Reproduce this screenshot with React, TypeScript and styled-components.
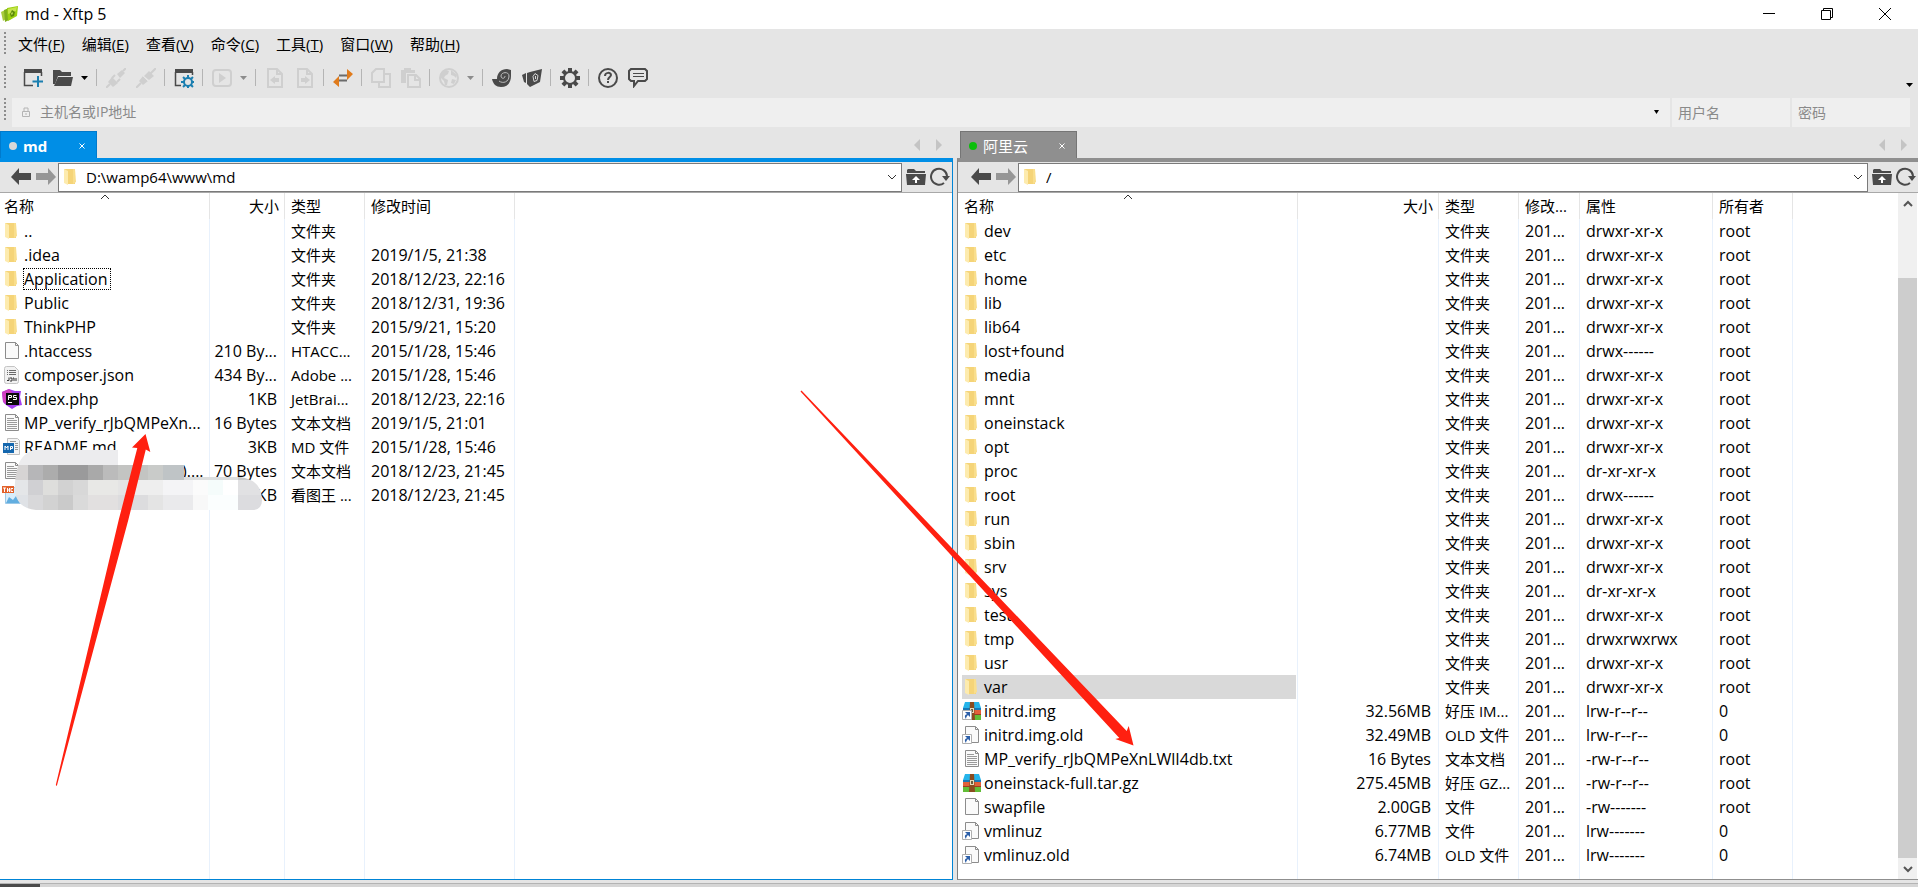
import React from "react";
import styled, { createGlobalStyle, css } from "styled-components";

const FONT = `"Open Sans", "Noto Sans CJK SC", sans-serif`;

const GlobalStyle = createGlobalStyle`
  *, *::before, *::after { box-sizing: border-box; }
  body { margin: 0; background: #e5e5e5; color: #000; font-family: ${FONT}; font-size: 15px; }
  button, input { font: inherit; color: inherit; margin: 0; padding: 0; border: 0; background: none; outline: 0; }
  svg { display: block; flex: none; }
`;

/* ---------- window frame ---------- */

const Window = styled.div`
  position: relative;
  display: flex;
  flex-direction: column;
  height: 100vh;
  overflow: hidden;
  background: #e5e5e5;
`;

const TitleBar = styled.header`
  display: flex;
  align-items: center;
  height: 29px;
  flex: none;
  padding: 0 4px 1px 0;
  background: #fff;
`;

const Title = styled.h1`
  flex: 1;
  margin: 0 0 0 5px;
  font-size: 16px;
  font-weight: 400;
  line-height: 26px;
`;

const WindowButton = styled.button`
  display: grid;
  place-items: center;
  width: 58px;
  height: 27px;
`;

const Grip = styled.span`
  width: 2px;
  height: 24px;
  margin-left: 4px;
  flex: none;
  background: repeating-linear-gradient(#8c8c8c 0 2px, transparent 2px 4px);
`;

const MenuBar = styled.nav`
  display: flex;
  align-items: center;
  height: 32px;
  flex: none;
  padding-bottom: 3px;
`;

const Menus = styled.div`
  display: flex;
  gap: 17px;
  margin-left: 12px;
`;

const MenuButton = styled.button`
  line-height: 24px;
  white-space: nowrap;
`;

const ToolBar = styled.div`
  display: flex;
  align-items: center;
  height: 35px;
  flex: none;
  padding-bottom: 2px;
`;

const Tools = styled.div`
  display: flex;
  align-items: center;
  flex: 1;
  margin-left: 12px;
`;

const ToolButton = styled.button`
  display: grid;
  place-items: center;
  width: 30px;
  height: 30px;
`;

const DropButton = styled.button`
  display: grid;
  place-items: center;
  width: 15px;
  height: 30px;
  padding-right: 3px;
`;

const Separator = styled.span`
  width: 1px;
  height: 17px;
  margin: 0 4px 0 3px;
  background: #b4b4b4;
`;

const OverflowButton = styled.button`
  align-self: flex-end;
  padding: 0 5px 7px;
`;

const AddressBar = styled.form`
  display: flex;
  gap: 2px;
  height: 35px;
  flex: none;
  padding: 2px 8px 4px 0;
`;

const Field = styled.label<{ $grow?: boolean }>`
  display: flex;
  align-items: center;
  width: 118px;
  padding: 0 6px;
  background: #efefef;
  font-size: 14px;
  ${(p) =>
    p.$grow &&
    css`
      flex: 1;
      margin-left: 4px;
      padding: 0 5px 1px 9px;
    `}
`;

const FieldInput = styled.input<{ $gap?: number }>`
  flex: 1;
  min-width: 0;
  margin-left: ${(p) => p.$gap ?? 0}px;
  line-height: 28px;
  &::placeholder {
    color: #8a8a8a;
    opacity: 1;
  }
`;

/* ---------- panels ---------- */

const Panels = styled.main`
  display: grid;
  grid-template-columns: minmax(0, 953fr) minmax(0, 961fr);
  gap: 4px;
  flex: 1;
  min-height: 0;
`;

const Panel = styled.section`
  display: flex;
  flex-direction: column;
  min-height: 0;
`;

const TabRow = styled.div<{ $indent: number }>`
  display: flex;
  justify-content: space-between;
  height: 27px;
  flex: none;
  padding: 0 3px 0 ${(p) => p.$indent}px;
`;

const Tab = styled.div<{ $active: boolean; $width: number }>`
  display: flex;
  align-items: center;
  width: ${(p) => p.$width}px;
  padding: 2px 3px 0 8px;
  color: #fff;
  background: ${(p) => (p.$active ? "#008ee6" : "#8f8f8f")};
  border: 1px solid ${(p) => (p.$active ? "#007acc" : "#757575")};
  border-bottom: 0;
  font-weight: ${(p) => (p.$active ? 700 : 400)};
`;

const Dot = styled.span<{ $color: string }>`
  width: 8px;
  height: 8px;
  border-radius: 50%;
  background: ${(p) => p.$color};
`;

const TabLabel = styled.span`
  flex: 1;
  margin-left: 6px;
  line-height: 22px;
`;

const CloseButton = styled.button`
  display: grid;
  place-items: center;
  width: 22px;
  height: 22px;
`;

const TabArrows = styled.div`
  display: flex;
  align-items: center;
`;

const TabArrow = styled.button`
  display: grid;
  place-items: center;
  width: 22px;
  height: 20px;
`;

const Body = styled.div<{ $active: boolean }>`
  display: flex;
  flex-direction: column;
  flex: 1;
  min-height: 0;
  border-top: 4px solid ${(p) => (p.$active ? "#008ee6" : "#8f8f8f")};
  border-bottom: 1px solid ${(p) => (p.$active ? "#0084d6" : "#8f8f8f")};
  ${(p) =>
    p.$active
      ? css`
          border-right: 1px solid #0084d6;
        `
      : css`
          border-left: 1px solid #808080;
        `}
`;

const NavRow = styled.div<{ $indent: number }>`
  display: flex;
  align-items: center;
  height: 31px;
  flex: none;
  padding: 0 0 0 ${(p) => p.$indent}px;
  border-bottom: 1px solid #a8a8a8;
`;

const NavButton = styled.button<{ $width: number }>`
  display: grid;
  place-items: center;
  width: ${(p) => p.$width}px;
  height: 28px;
`;

const PathBox = styled.label`
  display: flex;
  align-items: center;
  flex: 1;
  height: 29px;
  margin-right: 2px;
  padding: 0 3px 0 2px;
  background: #fff;
  border: 1px solid #7a7a7a;
`;

const PathInput = styled.input`
  flex: 1;
  min-width: 0;
  margin-left: 5px;
  font-size: 15px;
`;

const ListArea = styled.div`
  display: flex;
  flex: 1;
  min-height: 0;
  background: #fff;
`;

const FileTable = styled.table`
  flex: 1;
  width: 100%;
  height: 100%;
  table-layout: fixed;
  border-collapse: separate;
  border-spacing: 0;
`;

const HeadCell = styled.th<{ $right?: boolean; $indent?: number }>`
  position: relative;
  height: 26px;
  padding: 0 5px 0 ${(p) => p.$indent ?? 6}px;
  text-align: ${(p) => (p.$right ? "right" : "left")};
  font-weight: 400;
  line-height: 22px;
  white-space: nowrap;
  border-right: 1px solid #e5e5e5;
  &:last-child {
    border-right: 0;
  }
`;

const SortMark = styled.span`
  position: absolute;
  top: 0;
  left: 50%;
  transform: translateX(-50%);
`;

const Cell = styled.td<{ $right?: boolean; $large?: boolean }>`
  height: 24px;
  padding: ${(p) => (p.$right ? "0 7px 0 0" : "0 0 0 6px")};
  text-align: ${(p) => (p.$right ? "right" : "left")};
  font-size: ${(p) => (p.$large ? 16 : 15)}px;
  line-height: 22px;
  white-space: nowrap;
  overflow: hidden;
  border-right: 1px solid #e8f1fc;
  &:last-child {
    border-right: 0;
  }
`;

const NameCell = styled(Cell)<{ $indent: number }>`
  padding: 0 1px 0 ${(p) => p.$indent}px;
`;

const FillCell = styled(Cell)`
  height: auto;
`;

const NameLine = styled.div<{ $selected?: boolean }>`
  display: flex;
  align-items: center;
  gap: 2px;
  height: 24px;
  background: ${(p) => (p.$selected ? "#d9d9d9" : "transparent")};
`;

const FileName = styled.span<{ $focused?: boolean; $covered?: number }>`
  line-height: 20px;
  padding-left: ${(p) => p.$covered ?? 0}px;
  ${(p) =>
    p.$focused &&
    css`
      padding-right: 2px;
      outline: 1px dotted #000;
    `}
`;

const ScrollBar = styled.div`
  display: flex;
  flex-direction: column;
  width: 19px;
  flex: none;
  margin-right: 1px;
  background: #f0f0f0;
`;

const ScrollButton = styled.button`
  display: grid;
  place-items: center;
  height: 21px;
  flex: none;
`;

const ScrollSpace = styled.div`
  flex: 64;
`;

const ScrollThumb = styled.div`
  flex: 580;
  background: #cdcdcd;
`;

const StatusStrip = styled.footer`
  height: 4px;
  flex: none;
  margin-top: 3px;
  border-top: 1px solid #b4b4b4;
  background: #d6d6d6;
`;

const StatusMark = styled.div`
  width: 40px;
  height: 3px;
  background: #4a4a4a;
`;

const Overlay = styled.svg`
  position: absolute;
  top: 0;
  left: 0;
  pointer-events: none;
`;

/* ---------- icons ---------- */

const DARK = "#4a4a4a";
const FAINT = "#cfcfcf";

const Svg = ({ children, w = 20, h = 20 }: { children: React.ReactNode; w?: number; h?: number }) => (
  <svg width={w} height={h} viewBox={`0 0 ${w} ${h}`} aria-hidden="true" fill="none">
    {children}
  </svg>
);

const Caret = ({ color = "#000", w = 7 }: { color?: string; w?: number }) => (
  <Svg w={w} h={4}>
    <path d={`M0 0h${w}L${w / 2} 4z`} fill={color} />
  </Svg>
);

const AppLogo = () => (
  <Svg w={20} h={18}>
    <path d="M1 7l4-2 1 9-3 2z" fill="#a8cc3c" />
    <path d="M4 5l5-2 2 11-6 3z" fill="#7fae1c" />
    <path d="M7 3l11-2-1 10-9 5z" fill="#9bd010" />
    <path d="M8 4l9-2-1 4-8 3z" fill="#c5e44a" />
    <path d="M12 5l3 2-1 4-3 1-1-3z" fill="#5c8a08" />
    <path d="M12 7l1 1-1 2-1-1z" fill="#c8e65a" />
  </Svg>
);

const FolderIcon = () => (
  <Svg>
    <path d="M3 2h11v15H7z" fill="#f5d478" />
    <path d="M12 2h2l1 13-3 2z" fill="#f9de8c" />
    <path d="M3 2l4 2v14l-4-2z" fill="#fdebae" />
  </Svg>
);

const Page = () => (
  <>
    <path d="M3.5 1.5h10l3 3v13h-13z" fill="#fafafa" stroke="#8c8c8c" />
    <path d="M13.5 1.5v3h3" stroke="#8c8c8c" />
  </>
);

const ShortcutMark = () => (
  <>
    <path d="M.5 9.5h9v9h-9z" fill="#fff" stroke="#b0b0b0" />
    <path d="M3 11h5v5l-2-2c-1 1-2 2-2 4-2-3-1-4 1-5z" fill="#2c5fa8" />
  </>
);

const Archive = () => (
  <>
    <path d="M3 1h14l2 6H1z" fill="#25b4ea" />
    <path d="M1 7h18v2H1z" fill="#1779b8" />
    <path d="M1 9h18v4H1z" fill="#e2603a" />
    <path d="M1 13h18v1H1z" fill="#9b3d22" />
    <path d="M1 14h18v5H1z" fill="#62bd37" />
    <path d="M8 1h4l1 18H7z" fill="#8a4b1f" />
    <path d="M8 7h4v5H8z" fill="#e6d9b8" />
    <path d="M9 8h2v3H9z" fill="#6b5a3c" />
  </>
);

type IconKind = "folder" | "page" | "text" | "json" | "php" | "md" | "image" | "zip" | "zipLink" | "pageLink";

const FileIcon = ({ kind }: { kind: IconKind }) => {
  switch (kind) {
    case "folder":
      return <FolderIcon />;
    case "page":
      return (
        <Svg>
          <Page />
        </Svg>
      );
    case "pageLink":
      return (
        <Svg>
          <Page />
          <ShortcutMark />
        </Svg>
      );
    case "text":
      return (
        <Svg>
          <Page />
          <path d="M5 5.5h7M5 7.5h10M5 9.5h10M5 11.5h10M5 13.5h10M5 15.5h10" stroke="#9a9a9a" />
        </Svg>
      );
    case "json":
      return (
        <Svg>
          <path d="M2.5 3.5q0-2 2-2h8l4 4v11q0 2-2 2h-10q-2 0-2-2z" fill="#f2f2f2" stroke="#c4c4c4" />
          <path d="M5 5.5h1M7 5.5h7M5 7.5h1M7 7.5h7M5 9.5h1M7 9.5h7" stroke="#6a6a6a" />
          <path d="M5 15.5h2v-3M8 13h2v3H8M11 13h1v3M14 16v-3" stroke="#333" />
        </Svg>
      );
    case "php":
      return (
        <Svg>
          <path d="M0 3l7-3 6 2h6l-1 6 2 8-5 1-5 3-6-4-3-3z" fill="#a33ff0" />
          <path d="M0 3l7-3 3 3-7 12-2-3z" fill="#d03fc0" />
          <path d="M4 4h13v12H4z" fill="#0a0a0a" />
          <path d="M6.5 11V6.5h3v2h-3M14.5 6.5h-3v2h3v2H11M6 13.5h4" stroke="#fff" />
        </Svg>
      );
    case "md":
      return (
        <Svg>
          <path d="M5.5 1.5h10l2 2v14h-12z" fill="#f4f4f4" stroke="#c0c0c0" />
          <path d="M13 6.5h3M13 8.5h3M13 10.5h3M13 12.5h3M8 4.5h6" stroke="#999" />
          <path d="M1 6h11v10H1z" fill="#1467ae" />
          <path d="M3 13V9l1.5 2L6 9v4M8.5 13V9.5h2v2h-2" stroke="#fff" />
        </Svg>
      );
    case "image":
      return (
        <Svg>
          <path d="M3.5 2.5h15v16h-15z" fill="#d8edfb" stroke="#9cc9e8" />
          <path d="M4 18l3-6 4 3 3-4 4 7z" fill="#62aee0" />
          <path d="M0 1h12v7H0z" fill="#e2622c" />
          <path d="M1 3h3M2.5 3v4M5.5 3v4M7.5 3v4M5 5h2M11 3.5H9v3h2" stroke="#fff" />
        </Svg>
      );
    case "zip":
      return (
        <Svg>
          <Archive />
        </Svg>
      );
    case "zipLink":
      return (
        <Svg>
          <Archive />
          <ShortcutMark />
        </Svg>
      );
  }
};

const NewSession = () => (
  <Svg>
    <path d="M1 1h18v4H1z" fill={DARK} />
    <path d="M1.5 4v13.5H10M18.5 4v4" stroke={DARK} strokeWidth="1.5" />
    <path d="M15 8v11M9.5 13.5h11" stroke="#1b7fb0" strokeWidth="2" />
  </Svg>
);

const OpenFolder = () => (
  <Svg>
    <path d="M0 2h7l2 2h9v4H5L2 16H0z" fill={DARK} />
    <path d="M5 9h15l-2 9H1z" fill={DARK} />
  </Svg>
);

const Unplug = () => (
  <Svg>
    <path d="M11 6l5-4 3 3-5 5zM2 14l4-5 6 6-5 4z" fill={FAINT} />
    <path d="M17 3l3-3M0 20l4-4M6 10l3-3M11 14l3-3" stroke={FAINT} strokeWidth="2" />
  </Svg>
);

const Plug = () => (
  <Svg>
    <path d="M0 20l5-5M14 6l6-6" stroke={FAINT} strokeWidth="2" />
    <path d="M3 13l4-5 5 5-5 4zM8 8l5-5 5 5-5 4z" fill={FAINT} />
    <path d="M6 7l7 7" stroke="#e5e5e5" />
  </Svg>
);

const gearPath = (cx: number, cy: number, r: number, ro: number) =>
  Array.from({ length: 8 }, (_, i) => {
    const a = (i * Math.PI) / 4;
    return `M${cx + r * Math.cos(a)} ${cy + r * Math.sin(a)}L${cx + ro * Math.cos(a)} ${cy + ro * Math.sin(a)}`;
  }).join("");

const SessionProps = () => (
  <Svg>
    <path d="M1 1h18v4H1z" fill={DARK} />
    <path d="M1.5 4v13.5H7M18.5 4v3" stroke={DARK} strokeWidth="1.5" />
    <circle cx="14" cy="14" r="4" stroke="#1b7fb0" strokeWidth="2" />
    <path d={gearPath(14, 14, 4, 7)} stroke="#1b7fb0" strokeWidth="2" />
  </Svg>
);

const Play = () => (
  <Svg>
    <rect x="1" y="2" width="18" height="16" rx="3" stroke={FAINT} strokeWidth="2" />
    <path d="M7 5l7 5-7 5z" fill={FAINT} />
  </Svg>
);

const Transfer = ({ flip }: { flip?: boolean }) => (
  <Svg>
    <path d="M3 1h9l5 5v13H3z" stroke={FAINT} strokeWidth="2" />
    <path d="M12 1v5h5" stroke={FAINT} strokeWidth="2" />
    <path d={flip ? "M15 12l-5-4v2H6v4h4v2z" : "M5 12l5-4v2h4v4h-4v2z"} fill={FAINT} />
  </Svg>
);

const Sync = () => (
  <Svg>
    <path d="M6 7.5h9M5 12.5h9" stroke="#6b6b6b" strokeWidth="2" />
    <path d="M14 1l6 5-6 6zM6 8l-6 6 6 5z" fill="#e07b1c" />
  </Svg>
);

const Copy = () => (
  <Svg>
    <path d="M5 1h8v13H1V5z" stroke={FAINT} strokeWidth="2" />
    <path d="M14 6h5v13H8v-4" stroke={FAINT} strokeWidth="2" />
  </Svg>
);

const Paste = () => (
  <Svg>
    <path d="M0 2h14v3H5v10H0zM3 0h7v2H3z" fill={FAINT} />
    <path d="M7 7h8l4 4v8H7z" stroke={FAINT} strokeWidth="2" />
    <path d="M14 7v5h5" stroke={FAINT} strokeWidth="2" />
  </Svg>
);

const Globe = () => (
  <Svg>
    <circle cx="10" cy="10" r="9" stroke={FAINT} strokeWidth="2" />
    <path d="M2 5l5-3 3 1-1 3-3 2-1 2 4 2-1 5-2 0-1-4-3-3zM12 2l6 5-1 3-2-2-3-1zM13 11l4 1-2 4-3-1z" fill={FAINT} />
  </Svg>
);

const Shell = () => (
  <Svg>
    <path d="M0 11h5c0-6 4-10 10-10l4 1v6c0 7-4 11-10 11-5 0-8-3-9-8z" fill={DARK} />
    <path d="M7 13c4 3 10 1 10-5 0-5-8-4-8 0 0 3 4 3 4 0" stroke="#bdbdbd" />
  </Svg>
);

const FtpBook = () => (
  <Svg>
    <path d="M0 7l4-2v10l-2-1zM5 5l3-1v15l-3-3z" fill={DARK} />
    <path d="M8 4l12-3-2 13-10 5z" fill={DARK} />
    <path d="M13 5.5l3 2-1 5-3 1-1-5z" stroke="#d8d8d8" />
    <path d="M13.5 8v3" stroke="#d8d8d8" />
  </Svg>
);

const Gear = () => (
  <Svg>
    <circle cx="10" cy="10" r="6" stroke={DARK} strokeWidth="2" />
    <path d={gearPath(10, 10, 6, 10)} stroke={DARK} strokeWidth="4" />
  </Svg>
);

const Help = () => (
  <Svg>
    <circle cx="10" cy="10" r="9" stroke={DARK} strokeWidth="2" />
    <path d="M7 8c0-4 6-4 6-1 0 2-3 2-3 5M10 13v2" stroke={DARK} strokeWidth="2" />
  </Svg>
);

const Chat = () => (
  <Svg>
    <path d="M3 1h14l2 2v8l-2 2H10l-4 5v-5H3l-2-2V3z" stroke={DARK} strokeWidth="2" />
    <path d="M5 5.5h11M5 8.5h11" stroke={DARK} />
  </Svg>
);

const ArrowIcon = ({ right }: { right?: boolean }) => (
  <Svg>
    <path d={right ? "M20 10L12 1v5H0v7h12v5z" : "M0 10l8-9v5h12v7H8v5z"} fill={right ? "#969696" : DARK} />
  </Svg>
);

const FolderUp = () => (
  <Svg>
    <path d="M1 3l1-1h6l2 2h9v2H1z" fill={DARK} />
    <path d="M0 7h20l-1 11H1z" fill={DARK} />
    <path d="M10 9l4 4h-3v3H9v-3H6z" fill="#fff" />
  </Svg>
);

const Refresh = () => (
  <Svg>
    <path d="M14 16a8 8 0 1 1 3-7" stroke={DARK} strokeWidth="2" />
    <path d="M12 9h8l-4 5z" fill={DARK} />
  </Svg>
);

const Lock = () => (
  <Svg w={10} h={12}>
    <path d="M1.5 5.5h7v5h-7zM3 5V2h4v3M5 7v2" stroke="#b4b4b4" />
  </Svg>
);

const Chevron = ({ up, bold }: { up?: boolean; bold?: boolean }) => (
  <Svg w={12} h={8}>
    <path d={up ? "M2 6l4-4 4 4" : "M2 2l4 4 4-4"} stroke={bold ? "#555" : "#333"} strokeWidth={bold ? 2 : 1} />
  </Svg>
);

const SmallCross = () => (
  <Svg w={6} h={6}>
    <path d="M.5.5l5 5M5.5.5l-5 5" stroke="#fff" />
  </Svg>
);

/* ---------- data ---------- */

type Row = {
  icon: IconKind;
  name: string;
  cells: string[];
  focused?: boolean;
  selected?: boolean;
  covered?: number;
};

const localRows: Row[] = [
  { icon: "folder", name: "..", cells: ["", "文件夹", ""] },
  { icon: "folder", name: ".idea", cells: ["", "文件夹", "2019/1/5, 21:38"] },
  { icon: "folder", name: "Application", cells: ["", "文件夹", "2018/12/23, 22:16"], focused: true },
  { icon: "folder", name: "Public", cells: ["", "文件夹", "2018/12/31, 19:36"] },
  { icon: "folder", name: "ThinkPHP", cells: ["", "文件夹", "2015/9/21, 15:20"] },
  { icon: "page", name: ".htaccess", cells: ["210 By...", "HTACC...", "2015/1/28, 15:46"] },
  { icon: "json", name: "composer.json", cells: ["434 By...", "Adobe ...", "2015/1/28, 15:46"] },
  { icon: "php", name: "index.php", cells: ["1KB", "JetBrai...", "2018/12/23, 22:16"] },
  { icon: "text", name: "MP_verify_rJbQMPeXn...", cells: ["16 Bytes", "文本文档", "2019/1/5, 21:01"] },
  { icon: "md", name: "README.md", cells: ["3KB", "MD 文件", "2015/1/28, 15:46"] },
  { icon: "text", name: ")....", cells: ["70 Bytes", "文本文档", "2018/12/23, 21:45"], covered: 158 },
  { icon: "image", name: "", cells: ["KB", "看图王 ...", "2018/12/23, 21:45"] },
];

const folder = (name: string, mode = "drwxr-xr-x"): Row => ({
  icon: "folder",
  name,
  cells: ["", "文件夹", "201...", mode, "root"],
});

const remoteRows: Row[] = [
  folder("dev"),
  folder("etc"),
  folder("home"),
  folder("lib"),
  folder("lib64"),
  folder("lost+found", "drwx------"),
  folder("media"),
  folder("mnt"),
  folder("oneinstack"),
  folder("opt"),
  folder("proc", "dr-xr-xr-x"),
  folder("root", "drwx------"),
  folder("run"),
  folder("sbin"),
  folder("srv"),
  folder("sys", "dr-xr-xr-x"),
  folder("test"),
  folder("tmp", "drwxrwxrwx"),
  folder("usr"),
  { ...folder("var"), selected: true },
  { icon: "zipLink", name: "initrd.img", cells: ["32.56MB", "好压 IM...", "201...", "lrw-r--r--", "0"] },
  { icon: "pageLink", name: "initrd.img.old", cells: ["32.49MB", "OLD 文件", "201...", "lrw-r--r--", "0"] },
  { icon: "text", name: "MP_verify_rJbQMPeXnLWlI4db.txt", cells: ["16 Bytes", "文本文档", "201...", "-rw-r--r--", "root"] },
  { icon: "zip", name: "oneinstack-full.tar.gz", cells: ["275.45MB", "好压 GZ...", "201...", "-rw-r--r--", "root"] },
  { icon: "page", name: "swapfile", cells: ["2.00GB", "文件", "201...", "-rw-------", "root"] },
  { icon: "pageLink", name: "vmlinuz", cells: ["6.77MB", "文件", "201...", "lrw-------", "0"] },
  { icon: "pageLink", name: "vmlinuz.old", cells: ["6.74MB", "OLD 文件", "201...", "lrw-------", "0"] },
];

const menus = [
  ["文件", "F"],
  ["编辑", "E"],
  ["查看", "V"],
  ["命令", "C"],
  ["工具", "T"],
  ["窗口", "W"],
  ["帮助", "H"],
];

/* ---------- file list ---------- */

/* The type column, mostly Chinese text, keeps the base text size. */
const TYPE_COLUMN = 1;

type ListProps = { heads: string[]; widths: number[]; rows: Row[]; indent: number };

const FileList = ({ heads, widths, rows, indent }: ListProps) => (
  <FileTable>
    <colgroup>
      {widths.map((w, i) => (
        <col key={i} width={w} />
      ))}
      <col />
    </colgroup>
    <thead>
      <tr>
        {heads.map((h, i) => (
          <HeadCell key={h} $right={i === 1} $indent={i === 0 ? indent + 2 : undefined}>
            {h}
            {i === 0 && (
              <SortMark>
                <Chevron up />
              </SortMark>
            )}
          </HeadCell>
        ))}
        <HeadCell as="td" />
      </tr>
    </thead>
    <tbody>
      {rows.map((r, i) => (
        <tr key={i}>
          <NameCell $large $indent={indent}>
            <NameLine $selected={r.selected}>
              <FileIcon kind={r.icon} />
              <FileName $focused={r.focused} $covered={r.covered}>
                {r.name}
              </FileName>
            </NameLine>
          </NameCell>
          {r.cells.map((c, j) => (
            <Cell key={j} $right={j === 0} $large={j !== TYPE_COLUMN}>
              {c}
            </Cell>
          ))}
          <Cell />
        </tr>
      ))}
      <tr>
        {heads.map((h) => (
          <FillCell key={h} />
        ))}
        <FillCell />
      </tr>
    </tbody>
  </FileTable>
);

type PanelProps = {
  active: boolean;
  label: string;
  dot: string;
  path: string;
  tabWidth: number;
  tabIndent: number;
  navIndent: number;
  children: React.ReactNode;
};

const FilePanel = ({ active, label, dot, path, tabWidth, tabIndent, navIndent, children }: PanelProps) => (
  <Panel>
    <TabRow $indent={tabIndent}>
      <Tab $active={active} $width={tabWidth}>
        <Dot $color={dot} />
        <TabLabel>{label}</TabLabel>
        <CloseButton aria-label="关闭">
          <SmallCross />
        </CloseButton>
      </Tab>
      <TabArrows>
        <TabArrow aria-label="上一个">
          <Svg w={6} h={12}>
            <path d="M6 0v12L0 6z" fill="#c4c4c4" />
          </Svg>
        </TabArrow>
        <TabArrow aria-label="下一个">
          <Svg w={6} h={12}>
            <path d="M0 0v12l6-6z" fill="#c4c4c4" />
          </Svg>
        </TabArrow>
      </TabArrows>
    </TabRow>
    <Body $active={active}>
      <NavRow $indent={navIndent}>
        <NavButton $width={24} aria-label="后退">
          <ArrowIcon />
        </NavButton>
        <NavButton $width={25} aria-label="前进">
          <ArrowIcon right />
        </NavButton>
        <PathBox>
          <FolderIcon />
          <PathInput defaultValue={path} aria-label="路径" />
          <Chevron />
        </PathBox>
        <NavButton $width={24} aria-label="上级目录">
          <FolderUp />
        </NavButton>
        <NavButton $width={24} aria-label="刷新">
          <Refresh />
        </NavButton>
      </NavRow>
      <ListArea>{children}</ListArea>
    </Body>
  </Panel>
);

/* ---------- pixelated patch and arrows drawn over the lists ---------- */

const mosaic: { y: number; cells: [number, number, string][] }[] = [
  { y: 450, cells: [[14, 104, "#ececee"]] },
  {
    y: 465,
    cells: [
      [14, 14, "#d6d4d4"], [28, 15, "#b6b6b8"], [43, 15, "#acacac"], [58, 30, "#9a9a9b"], [88, 15, "#a9a9a9"],
      [103, 15, "#bbbbbb"], [118, 30, "#c3c4c2"], [148, 15, "#c9cbc9"], [163, 21, "#bfc4c6"],
    ],
  },
  {
    y: 480,
    cells: [
      [14, 14, "#e4e6e8"], [28, 15, "#d0d0d3"], [43, 15, "#dededc"], [58, 15, "#d2d2d2"], [73, 15, "#d8d8d8"],
      [88, 30, "#e8e8e6"], [118, 15, "#e4e4e4"], [133, 30, "#eeeeee"], [163, 30, "#f4f4f6"], [193, 15, "#fbfbfb"],
      [208, 15, "#f5fcfb"], [223, 15, "#ffffff"], [238, 24, "#e1e1e3"],
    ],
  },
  {
    y: 495,
    cells: [
      [14, 14, "#dfe2e6"], [28, 15, "#d8d8da"], [43, 15, "#d2d2d2"], [58, 15, "#cacaca"], [73, 15, "#dadada"],
      [88, 30, "#e2e0e0"], [118, 30, "#dcdcde"], [148, 15, "#e4e4e4"], [163, 30, "#eaeaec"], [193, 15, "#f8f8f8"],
      [208, 30, "#fbfefe"], [238, 24, "#dcdcdf"],
    ],
  },
];

const Annotations = () => (
  <Overlay width="1200" height="800" viewBox="0 0 1200 800" aria-hidden="true">
    <clipPath id="patch">
      <path d="M34 450H118V465H184V477H240Q262 480 262 500Q262 510 252 510H36Q16 508 15 490Q14 482 17 470Q20 454 34 450Z" />
    </clipPath>
    <g clipPath="url(#patch)" shapeRendering="crispEdges">
      <rect x="180" y="477" width="60" height="3" fill="#dcdede" />
      <rect x="238" y="477" width="24" height="3" fill="#c8caca" />
      {mosaic.map((r) =>
        r.cells.map(([x, w, c]) => <rect key={`${r.y}-${x}`} x={x} y={r.y} width={w} height="15" fill={c} />),
      )}
    </g>
    <path d="M145.5 434L150.3 452L145.8 449.5L128.3 520L56.8 786L55.8 785L118.7 520L137.3 448L132 447.5Z" fill="#ff2010" />
    <path d="M800.5 391.5L801.5 390.5L1126.7 731L1128.7 726L1133.5 745.5L1115.3 739L1119.3 738Z" fill="#ff2010" />
  </Overlay>
);

export default function App() {
  return (
    <Window>
      <GlobalStyle />
      <TitleBar>
        <AppLogo />
        <Title>md - Xftp 5</Title>
        <WindowButton aria-label="最小化">
          <Svg w={12} h={12}>
            <path d="M0 5.5h12" stroke="#000" />
          </Svg>
        </WindowButton>
        <WindowButton aria-label="还原">
          <Svg w={12} h={12}>
            <path d="M.5 2.5h9v9h-9zM2.5 2V.5h9v9H10" stroke="#000" />
          </Svg>
        </WindowButton>
        <WindowButton aria-label="关闭">
          <Svg w={12} h={12}>
            <path d="M0 0l12 12M12 0L0 12" stroke="#000" />
          </Svg>
        </WindowButton>
      </TitleBar>

      <MenuBar>
        <Grip />
        <Menus>
          {menus.map(([label, key]) => (
            <MenuButton key={key}>
              {label}(<u>{key}</u>)
            </MenuButton>
          ))}
        </Menus>
      </MenuBar>

      <ToolBar>
        <Grip />
        <Tools>
          <ToolButton aria-label="新建"><NewSession /></ToolButton>
          <ToolButton aria-label="打开"><OpenFolder /></ToolButton>
          <DropButton aria-label="打开选项"><Caret /></DropButton>
          <Separator />
          <ToolButton aria-label="断开"><Unplug /></ToolButton>
          <ToolButton aria-label="连接"><Plug /></ToolButton>
          <Separator />
          <ToolButton aria-label="属性"><SessionProps /></ToolButton>
          <Separator />
          <ToolButton aria-label="运行"><Play /></ToolButton>
          <DropButton aria-label="运行选项"><Caret color="#8c8c8c" /></DropButton>
          <Separator />
          <ToolButton aria-label="下载"><Transfer /></ToolButton>
          <ToolButton aria-label="上传"><Transfer flip /></ToolButton>
          <Separator />
          <ToolButton aria-label="同步"><Sync /></ToolButton>
          <Separator />
          <ToolButton aria-label="复制"><Copy /></ToolButton>
          <ToolButton aria-label="粘贴"><Paste /></ToolButton>
          <Separator />
          <ToolButton aria-label="编码"><Globe /></ToolButton>
          <DropButton aria-label="编码选项"><Caret color="#8c8c8c" /></DropButton>
          <Separator />
          <ToolButton aria-label="Xshell"><Shell /></ToolButton>
          <ToolButton aria-label="Xftp"><FtpBook /></ToolButton>
          <Separator />
          <ToolButton aria-label="选项"><Gear /></ToolButton>
          <Separator />
          <ToolButton aria-label="帮助"><Help /></ToolButton>
          <ToolButton aria-label="反馈"><Chat /></ToolButton>
        </Tools>
        <OverflowButton aria-label="更多"><Caret /></OverflowButton>
      </ToolBar>

      <AddressBar>
        <Grip />
        <Field $grow>
          <Lock />
          <FieldInput $gap={9} placeholder="主机名或IP地址" aria-label="主机名或IP地址" />
          <DropButton type="button" aria-label="历史记录"><Caret w={5} /></DropButton>
        </Field>
        <Field>
          <FieldInput placeholder="用户名" aria-label="用户名" />
        </Field>
        <Field>
          <FieldInput type="password" placeholder="密码" aria-label="密码" />
        </Field>
      </AddressBar>

      <Panels>
        <FilePanel active label="md" dot="#d8d8d8" path="D:\wamp64\www\md" tabWidth={97} tabIndent={0} navIndent={9}>
          <FileList
            heads={["名称", "大小", "类型", "修改时间"]}
            widths={[210, 75, 80, 150]}
            rows={localRows}
            indent={2}
          />
        </FilePanel>
        <FilePanel active={false} label="阿里云" dot="#0abe0a" path="/" tabWidth={117} tabIndent={3} navIndent={11}>
          <FileList
            heads={["名称", "大小", "类型", "修改...", "属性", "所有者"]}
            widths={[340, 141, 80, 61, 133, 80]}
            rows={remoteRows}
            indent={4}
          />
          <ScrollBar>
            <ScrollButton aria-label="向上滚动"><Chevron up bold /></ScrollButton>
            <ScrollSpace />
            <ScrollThumb />
            <ScrollButton aria-label="向下滚动"><Chevron bold /></ScrollButton>
          </ScrollBar>
        </FilePanel>
      </Panels>

      <StatusStrip>
        <StatusMark />
      </StatusStrip>
      <Annotations />
    </Window>
  );
}
